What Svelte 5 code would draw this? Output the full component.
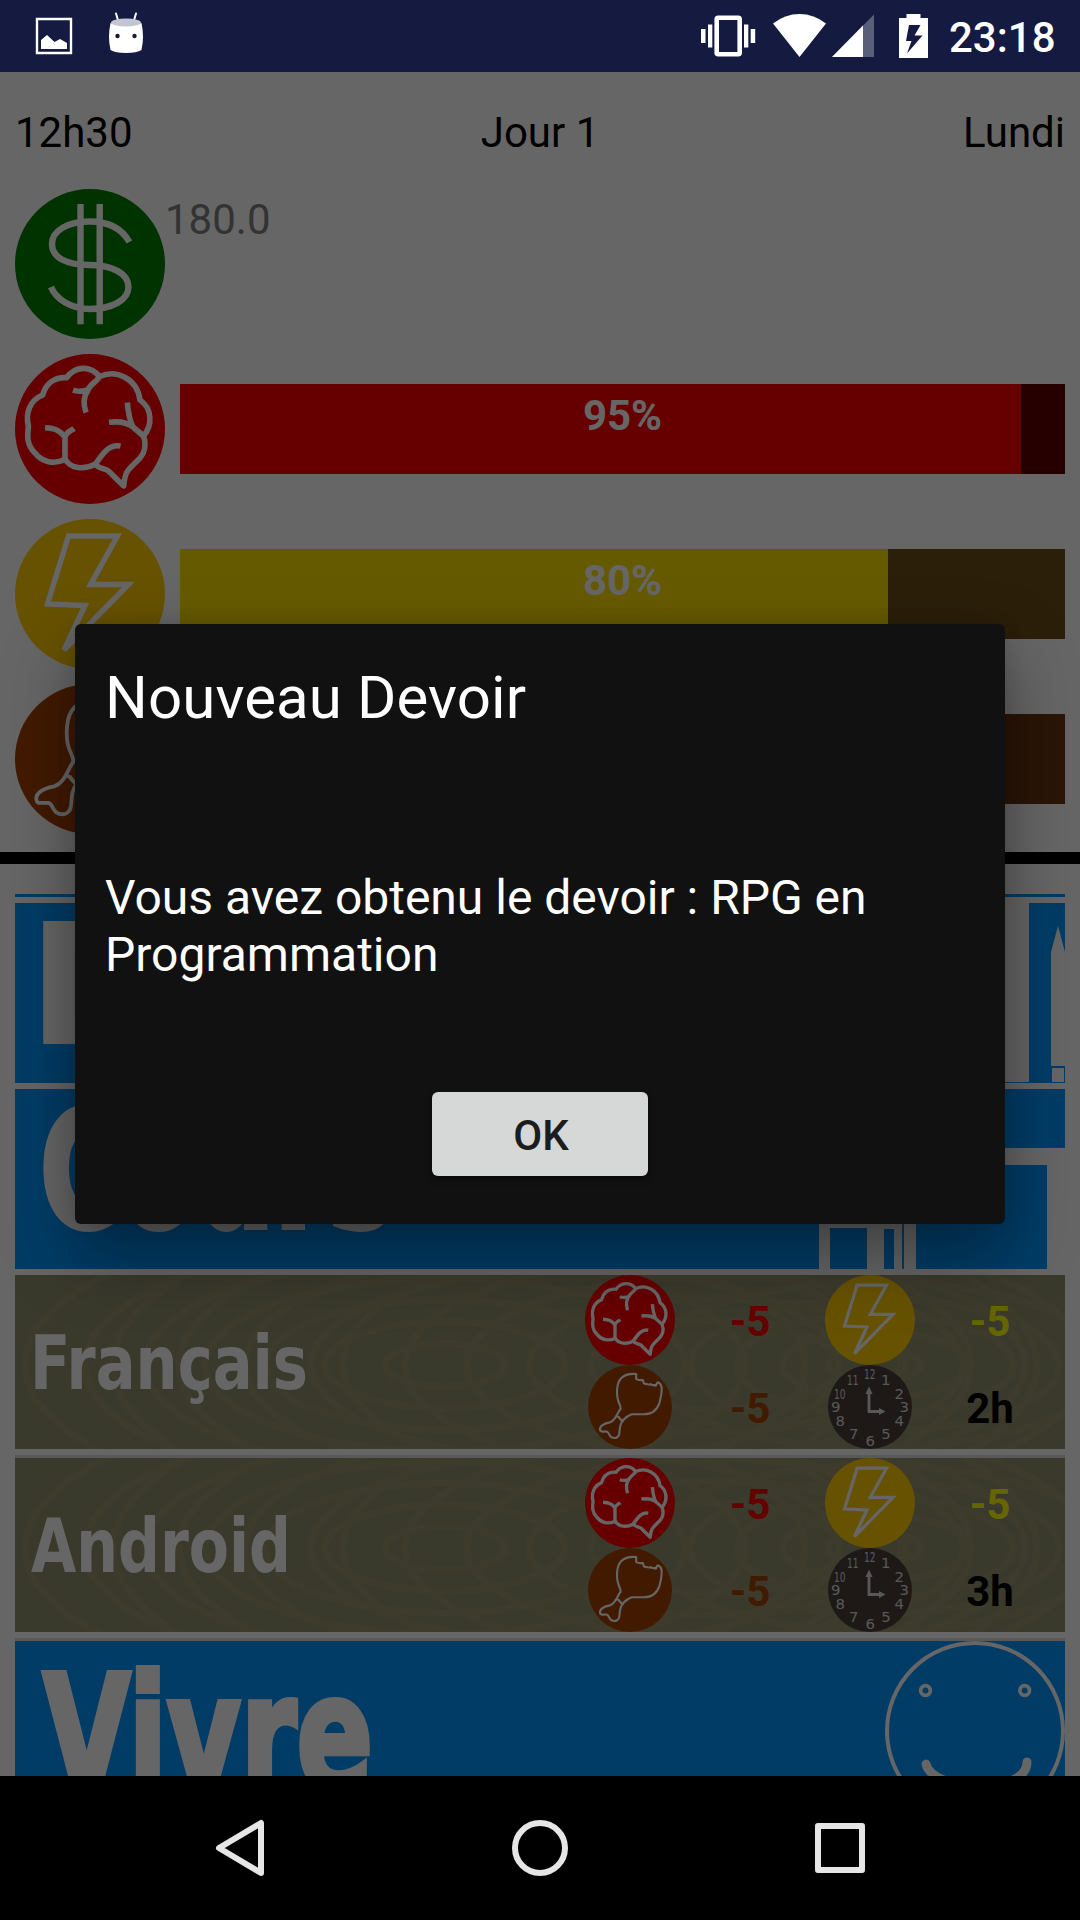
<script>
  const gauges = [
    { icon: 'brain', value: 95, kind: 'mind' },
    { icon: 'bolt', value: 80, kind: 'energy' },
    { icon: 'food', value: 70, kind: 'hunger' },
  ];
  const courses = [
    { name: 'Français', width: 278, x: 15, hours: '2h' },
    { name: 'Android', width: 260, x: 16, hours: '3h' },
  ];
  const digits = [
    ['12', 41.7, 8.7], ['1', 57.7, 15.3], ['2', 71.3, 28.7], ['3', 76.3, 42],
    ['4', 71.3, 55.7], ['5', 58, 69], ['6', 42.3, 76], ['7', 25.7, 69],
    ['8', 12.3, 55.7], ['9', 7.7, 41.7], ['10', 11.7, 28.7], ['11', 24.7, 15.3],
  ];
  // Growth rings of the wooden boards behind each course
  const rings = [];
  for (const [cx, step, count, from] of [[860, 46, 5, 1], [700, 62, 6, 2], [560, 66, 7, 4], [430, 60, 7, 1]]) {
    for (let i = from; i <= count; i++) rings.push({ cx, rx: i * step, ry: i * step * 0.36 });
  }
</script>

{#snippet icon(name)}
  <svg class="icon" viewBox="0 0 150 150">
    {#if name === 'money'}
      <circle cx="75" cy="75" r="75" fill="#008000" />
      <g fill="none" stroke="#fff" stroke-width="6.4">
        <path d="M65.5 15V135.3M84.7 15V135.3" />
        <path d="M114.5 53C107 40 94 32.500 75 32.500C52 32.500 37 42 37 55C37 69 52 76 75 76C98 76 113.5 85 113.5 98C113.5 111 97 120 75 120C56 120 41 110 36 98" />
      </g>
    {:else if name === 'brain'}
      <circle cx="75" cy="75" r="75" fill="#f00" />
      <g fill="none" stroke="#fff" stroke-width="5.6" stroke-linejoin="round">
        <path d="M13.5 72.5C10 59 15 46 27.7 41C31 29 40 23 51.7 23.7C60 12 75 11 84.5 22.5C101 15 122 24 125 46C137 54 138 71 128.5 82C132 92 129 101 122 107C113 116 110 117 108.7 132L93.5 117C89 114 84 115 80 110.3C69 116 56 115 50.3 105.3C39 111 27 108 20 99C12 91 12 83 13.5 72.5Z" />
        <path d="M58 36.2C63 38 69 37 73 36C75 30 82 28 84 23M73 36C68 43 68 50 71 58.7M112.3 48.5C113 57 114 65 118 73M94 68.3C105 67 113 69 118 73L128.5 82M30 73.7C41 74 45 77 50 83C52 77 56 77 59 74.5M50 83V105.5M80.5 110C88 99 94 90 105.5 92" />
      </g>
    {:else if name === 'bolt'}
      <circle cx="75" cy="75" r="75" fill="#ffcd00" />
      <path d="M53.500 17H102.500L75.5 65.5H113.5L49 131L70 86.5L32.5 85Z" fill="none" stroke="#fff" stroke-width="5.4" />
    {:else if name === 'food'}
      <circle cx="75" cy="75" r="75" fill="#a54100" />
      <g fill="none" stroke="#fff" stroke-width="3.8" stroke-linejoin="round">
        <path d="M86 16V25C90 28 94 27 98 27C100 29 97 33 102 34C105 32 108 37 112 34C115 38 120 34 120 37C124 37 121 31 125 31C130 33 131 37 131.5 40C132 49 131 55 127.5 68C122 84 112 88 99 88H78C70 91 66 95 63 98C56 107 57 112 56 122C55 129 50 131 45 130C37 129 39 121 34 119C27 118 22 121 21.5 116C20 109 29 104 39.3 102.4C50 99 53 84 58.3 78C59 70 50 66 52 43C53 28 60 14 86 16Z" />
        <path d="M50 91L55 93L58 97L63 102" />
      </g>
    {/if}
  </svg>
{/snippet}

{#snippet clock()}
  <svg class="icon" viewBox="0 0 84 84">
    <circle cx="42" cy="42" r="42" fill="#4b4037" />
    <g class="digits">
      {#each digits as [d, x, y]}
        <text {x} y={y + 5}
          textLength={d.length > 1 ? 11.5 : 9.5} lengthAdjust="spacingAndGlyphs">{d}</text>
      {/each}
    </g>
    <path d="M41 26V46.5H53" fill="none" stroke="#dcdcdc" stroke-width="2.8" />
    <path d="M37.5 29L41 21.5L44.5 29ZM51 43L57.5 46.5L51 50Z" fill="#dcdcdc" />
  </svg>
{/snippet}

<div class="phone">
  <header class="status">
    <svg class="notifs" viewBox="0 0 160 72" fill="#fff">
      <path d="M37 19H71V53H37Z" fill="none" stroke="#fff" stroke-width="2.4" />
      <path d="M41 40L47 35L54.5 42L60 39L67 43V49H41Z" />
      <path d="M116 13.5L118.5 22M136 13.5L133.5 22" stroke="#fff" stroke-width="2" stroke-linecap="round" />
      <path d="M110.500 23Q126 29 141.500 23Q144.500 37 141.500 50Q137 53 126 53Q115 53 110.500 50Q107.500 37 110.500 23Z" />
      <ellipse cx="126" cy="22.500" rx="15" ry="4" fill="#c3c5d1" />
      <circle cx="117.500" cy="36" r="2.2" fill="#141a40" />
      <circle cx="134.500" cy="36" r="2.2" fill="#141a40" />
    </svg>
    <svg class="signals" viewBox="690 0 250 72" fill="#fff">
      <path d="M701 29h4.500v14h-4.500zM708 24.500h4.300v23h-4.300zM744 24.500h4.300v23h-4.300zM750.700 29h4.500v14h-4.500z" />
      <rect x="716.700" y="17.800" width="23" height="36.500" rx="1.500" fill="none" stroke="#fff" stroke-width="4.600" />
      <path d="M799.500 57L773 23.500Q785 14 799.500 14T826 23.500Z" />
      <path d="M832 57L874 14.500V57Z" opacity=".3" />
      <path d="M832 57L863 25.600V57Z" />
      <path fill-rule="evenodd" d="M899 18h7.500v-4h14v4h7.500v40h-29zM909 25L906 41H911.500L907 53.500L922.500 35.500H914.500L920.500 25Z" />
    </svg>
    <span class="time">23:18</span>
  </header>

  <main>
    <div class="day"><span>12h30</span><span>Jour 1</span><span>Lundi</span></div>

    <section class="stats">
      <div class="stat">{@render icon('money')}<span class="cash">180.0</span></div>
      {#each gauges as g}
        <div class="stat">
          {@render icon(g.icon)}
          <div class="bar {g.kind}">
            <div class="fill" style="width: {g.value}%"></div>
            <span>{g.value}%</span>
          </div>
        </div>
      {/each}
    </section>

    <hr />

    <section class="list">
      <div class="strip"></div>
      <div class="banner">
        <svg viewBox="0 0 1050 180">
          <text x="18" y="138" class="heavy" textLength="600" lengthAdjust="spacingAndGlyphs">Devoirs</text>
          <path fill="#fff" d="M860 0h154v179h-154zM1036 49L1043 23L1050 49V163H1036zM1037 165h12v14h-12z" />
        </svg>
      </div>
      <div class="banner">
        <svg viewBox="0 0 1050 180">
          <text x="25" y="138" class="heavy" textLength="354" lengthAdjust="spacingAndGlyphs">Cours</text>
          <path fill="#fff" d="M804 59h246v121h-18V76H901v104h-12V76h-2v104h-8V140h-10v40h-17V139h-37v41h-11z" />
        </svg>
      </div>

      {#each courses as c}
        <div class="course">
          <svg class="wood" viewBox="0 0 1050 174" preserveAspectRatio="none">
            {#each rings as r}
              <ellipse cx={r.cx} cy="90" rx={r.rx} ry={r.ry} />
            {/each}
            <text x={c.x} y="114" textLength={c.width} lengthAdjust="spacingAndGlyphs">{c.name}</text>
          </svg>
          <div class="costs">
            <div class="cell big">{@render icon('brain')}</div>
            <b class="red">-5</b>
            <div class="cell big">{@render icon('bolt')}</div>
            <b class="yellow">-5</b>
            <div class="cell">{@render icon('food')}</div>
            <b class="brown">-5</b>
            <div class="cell">{@render clock()}</div>
            <b>{c.hours}</b>
          </div>
        </div>
      {/each}

      <div class="banner live">
        <svg viewBox="0 0 1050 180">
          <text x="28" y="149" class="heavy" textLength="330" lengthAdjust="spacingAndGlyphs">Vivre</text>
          <g fill="none" stroke="#fff">
            <circle cx="960" cy="90" r="88" stroke-width="4" />
            <circle cx="910.500" cy="49.500" r="4.800" stroke-width="3.800" />
            <circle cx="1009.700" cy="49.500" r="4.800" stroke-width="3.800" />
            <path d="M911 123C918 152 1012 154 1012 121" stroke-width="9" stroke-linecap="round" />
          </g>
        </svg>
      </div>
    </section>

    <div class="scrim">
      <div class="dialog">
        <h1>Nouveau Devoir</h1>
        <p>Vous avez obtenu le devoir : RPG en Programmation</p>
        <button>OK</button>
      </div>
    </div>
  </main>

  <nav>
    <svg viewBox="0 0 1080 144" fill="none" stroke="#e6e6e6" stroke-width="6" stroke-linejoin="round">
      <path d="M219 72L261 47V97Z" />
      <circle cx="540" cy="72" r="25" />
      <rect x="818" y="50" width="44" height="44" />
    </svg>
  </nav>
</div>

<style>
  :global(body) { margin: 0; background: #000; }
  .phone {
    width: 1080px; height: 1920px; overflow: hidden;
    display: flex; flex-direction: column;
    font: 42px/49px Roboto, sans-serif; color: #000;
  }
  svg { display: block; }
  .status {
    height: 72px; flex: none; background: #141a40; color: #fff;
    display: flex; align-items: center; box-sizing: border-box; padding-right: 25px;
  }
  .notifs { width: 160px; height: 72px; }
  .signals { width: 250px; height: 72px; margin-left: auto; }
  .time { width: 106px; margin-left: 9px; font-weight: 500; white-space: nowrap; padding-top: 2px; }

  main { position: relative; flex: 1; min-height: 0; overflow: hidden; background: #fff; }
  .day {
    height: 117px; box-sizing: border-box; padding: 36px 15px 0;
    display: grid; grid-template-columns: 1fr 1fr 1fr;
  }
  .day span:nth-child(2) { text-align: center; }
  .day span:nth-child(3) { text-align: right; }

  .stats { display: flex; flex-direction: column; gap: 15px; padding: 0 15px; }
  .stat { display: flex; height: 150px; }
  .stat > :global(.icon) { width: 150px; height: 150px; flex: none; }
  .icon { width: 100%; height: 100%; }
  .cash { color: #7f7f7f; padding-top: 6px; }
  .bar {
    flex: 1; height: 90px; margin: 30px 0 0 15px; display: grid;
    font-weight: 700; color: #fff; text-align: center;
  }
  .bar > * { grid-area: 1 / 1; }
  .bar span { padding-top: 7px; }
  .mind { background: #5f0000; } .mind .fill { background: #f00; }
  .energy { background: #6c4e19; } .energy .fill { background: #ffe100; }
  .hunger { background: #6a3512; } .hunger .fill { background: #a54100; }

  hr { height: 12px; margin: 18px 0 0; border: 0; background: #000; }

  .list { padding: 30px 15px 0; }
  .strip { height: 3px; background: #0096ff; margin-bottom: 6px; }
  .banner { height: 180px; background: #0096ff; margin-bottom: 6px; overflow: hidden; }
  .banner svg { width: 1050px; height: 180px; }
  .heavy {
    font: 700 161px "DejaVu Sans", sans-serif; fill: #fff;
    stroke: #fff; stroke-width: 6px;
  }
  .course {
    height: 174px; background: #8e8e6e; background-clip: padding-box;
    display: grid; margin-bottom: 6px;
  }
  .course + .course, .banner.live { border-top: 3px solid #dedede; }
  .banner.live { background-clip: padding-box; }
  .course > * { grid-area: 1 / 1; }
  .wood { width: 1050px; height: 174px; }
  .wood ellipse { fill: none; stroke: #96936e; stroke-width: 8px; }
  .wood text { font: 700 74px "DejaVu Sans", sans-serif; fill: #fff; }
  .costs {
    justify-self: end; margin-right: 15px; display: grid; z-index: 1;
    grid-template: 90px 84px / repeat(4, 120px); place-items: center;
  }
  .cell { width: 84px; height: 84px; }
  .cell.big { width: 90px; height: 90px; }
  .costs b { padding-top: 3px; }
  .red { color: #f00; } .yellow { color: #ff0; } .brown { color: #a54100; }
  .digits text { font: 14px "DejaVu Sans", sans-serif; fill: #dcdcdc; text-anchor: middle; }

  .scrim {
    position: absolute; inset: 0; z-index: 2; background: rgba(0, 0, 0, .6);
    display: flex; justify-content: center; align-items: flex-start;
  }
  .dialog {
    width: 930px; height: 600px; margin-top: 552px; box-sizing: border-box;
    padding: 38px 30px 48px; border-radius: 6px; background: #111; color: #fff;
    display: flex; flex-direction: column; align-items: flex-start;
    box-shadow: 0 30px 70px rgba(0, 0, 0, .38), 0 0 18px rgba(0, 0, 0, .1);
  }
  h1 { margin: 0; font: 400 60px/72px Roboto, sans-serif; letter-spacing: .1px; }
  p { margin: 135px 0 0; font-size: 48px; line-height: 57px; width: 800px; }
  button {
    width: 216px; height: 84px; margin: auto auto 0; border: 0; border-radius: 6px;
    background: #d6d7d7; color: #1c1c1c; font: 500 42px/49px Roboto, sans-serif;
    padding: 3px 0 0 2px; box-shadow: 0 3px 6px rgba(0, 0, 0, .5);
  }
  nav { height: 144px; flex: none; background: #000; }
  nav svg { width: 1080px; height: 144px; }
</style>
